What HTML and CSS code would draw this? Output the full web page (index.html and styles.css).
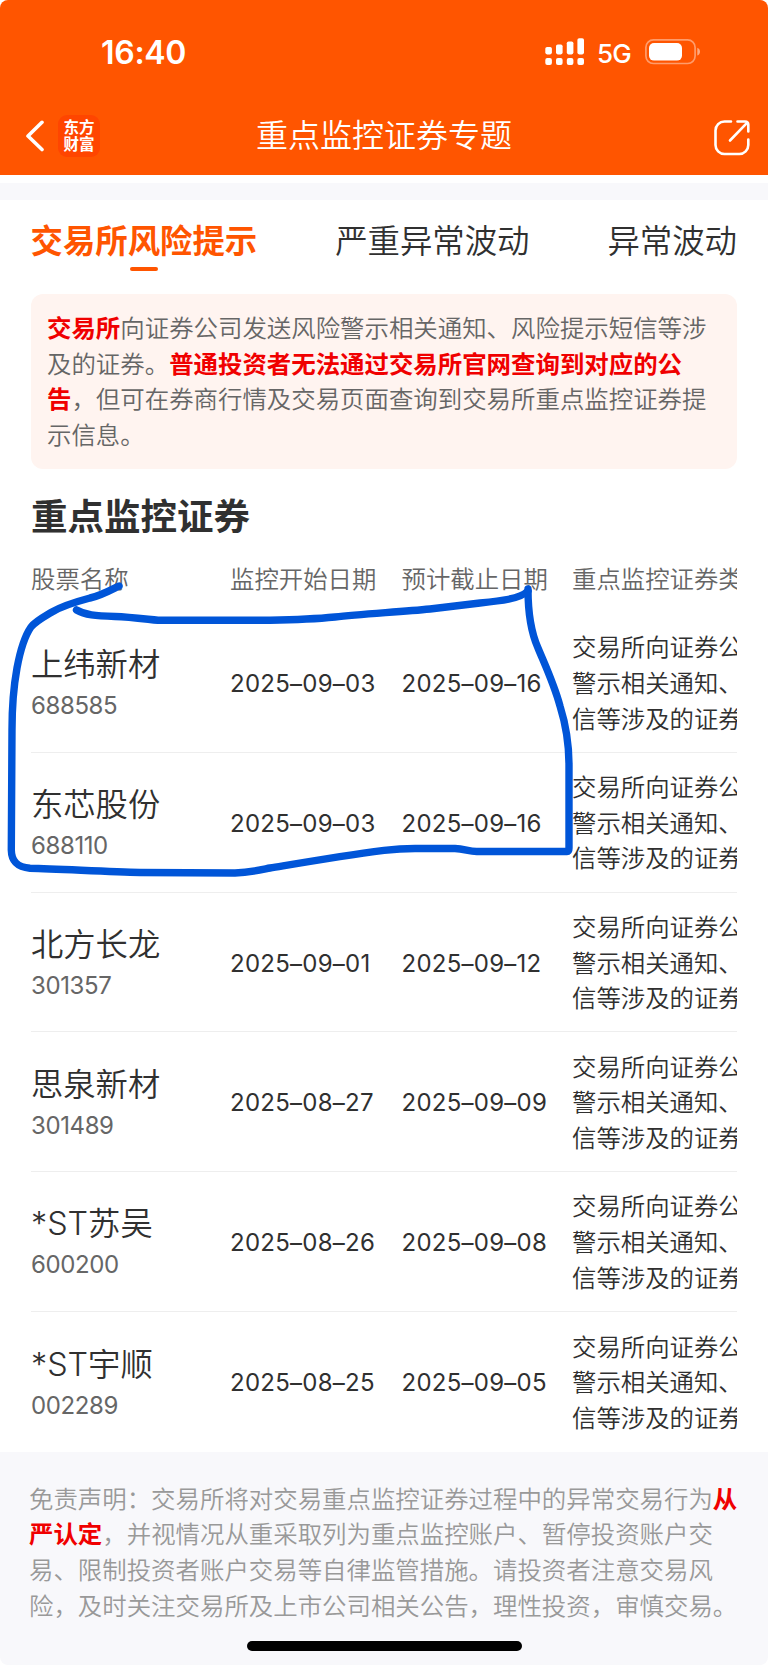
FILE: index.html
```
<!DOCTYPE html>
<html lang="zh-CN">
  <head>
    <meta charset="UTF-8" />
    <meta name="viewport" content="width=device-width, initial-scale=1.0" />
    <title>重点监控证券专题</title>
    <link rel="stylesheet" href="styles.css">
  </head>
  <body>
    <div class="screen">
      <header class="header">
        <div class="status-bar">
          <span class="time">16:40</span>
          <div class="status-right">
            <svg class="signal" width="40" height="28" viewBox="0 0 40 28" fill="currentColor">
              <rect x="0.3" y="9" width="6.6" height="7.4" rx="1.8"></rect>
              <rect x="11" y="6.5" width="6.6" height="9.9" rx="1.8"></rect>
              <rect x="21.8" y="3.5" width="6.6" height="12.9" rx="1.8"></rect>
              <rect x="32.4" y="0.2" width="6.6" height="16.2" rx="1.8"></rect>
              <rect x="0.3" y="20" width="6.6" height="7" rx="2"></rect>
              <rect x="11" y="20" width="6.6" height="7" rx="2"></rect>
              <rect x="21.8" y="20" width="6.6" height="7" rx="2"></rect>
              <rect x="32.4" y="20" width="6.6" height="7" rx="2"></rect>
            </svg>
            <span class="network">5G</span>
            <svg class="battery" width="56" height="26" viewBox="0 0 56 26">
              <rect x="0.9" y="0.9" width="49.2" height="23.6" rx="7.5" fill="none" stroke="#ffffff" stroke-opacity="0.42" stroke-width="1.7"></rect>
              <rect x="4" y="4" width="33" height="17.6" rx="5" fill="#ffffff"></rect>
              <path d="M52.3 8.8c3.6 1.3 3.6 6.5 0 7.8z" fill="#ffffff" fill-opacity="0.5"></path>
            </svg>
          </div>
        </div>
        <nav class="nav-bar">
          <div class="nav-left">
            <svg width="20" height="32" viewBox="0 0 20 32" fill="none" stroke="currentColor" stroke-width="3.6" stroke-linecap="round" stroke-linejoin="round">
              <polyline points="18 2.3 4 16 18 29.5"></polyline>
            </svg>
            <div class="logo"><span>东方</span><span>财富</span></div>
          </div>
          <h1 class="nav-title">重点监控证券专题</h1>
          <svg class="share" width="38" height="38" viewBox="0 0 38 38" fill="none" stroke="currentColor" stroke-width="2.6" stroke-linecap="round" stroke-linejoin="round">
            <path d="M18 2.5H11.5a9 9 0 0 0-9 9V26a9 9 0 0 0 9 9H26.3a9 9 0 0 0 9-9V20.5"></path>
            <path d="M24.5 2.5H32q3.3 0 3.3 3.3V12.5M34 3.8L17 21.5"></path>
          </svg>
        </nav>
      </header>

      <div class="divider"></div>

      <div class="tabs">
        <div class="tab active">交易所风险提示</div>
        <div class="tab">严重异常波动</div>
        <div class="tab">异常波动</div>
      </div>

      <p class="notice"><strong>交易所</strong>向证券公司发送风险警示相关通知、风险提示短信等涉<br>及的证券。<strong>普通投资者无法通过交易所官网查询到对应的公<br>告</strong>，但可在券商行情及交易页面查询到交易所重点监控证券提<br>示信息。</p>

      <main class="content">
        <h2 class="section-title">重点监控证券</h2>
        <div class="table">
          <div class="row head">
            <span>股票名称</span>
            <span>监控开始日期</span>
            <span>预计截止日期</span>
            <span>重点监控证券类</span>
          </div>
          <div class="row">
            <div class="stock"><span class="name">上纬新材</span><span class="code">688585</span></div>
            <span class="date">2025–09–03</span>
            <span class="date">2025–09–16</span>
            <span class="type">交易所向证券公<br>警示相关通知、<br>信等涉及的证券</span>
          </div>
          <div class="row">
            <div class="stock"><span class="name">东芯股份</span><span class="code">688110</span></div>
            <span class="date">2025–09–03</span>
            <span class="date">2025–09–16</span>
            <span class="type">交易所向证券公<br>警示相关通知、<br>信等涉及的证券</span>
          </div>
          <div class="row">
            <div class="stock"><span class="name">北方长龙</span><span class="code">301357</span></div>
            <span class="date">2025–09–01</span>
            <span class="date">2025–09–12</span>
            <span class="type">交易所向证券公<br>警示相关通知、<br>信等涉及的证券</span>
          </div>
          <div class="row">
            <div class="stock"><span class="name">思泉新材</span><span class="code">301489</span></div>
            <span class="date">2025–08–27</span>
            <span class="date">2025–09–09</span>
            <span class="type">交易所向证券公<br>警示相关通知、<br>信等涉及的证券</span>
          </div>
          <div class="row">
            <div class="stock"><span class="name">*ST苏吴</span><span class="code">600200</span></div>
            <span class="date">2025–08–26</span>
            <span class="date">2025–09–08</span>
            <span class="type">交易所向证券公<br>警示相关通知、<br>信等涉及的证券</span>
          </div>
          <div class="row">
            <div class="stock"><span class="name">*ST宇顺</span><span class="code">002289</span></div>
            <span class="date">2025–08–25</span>
            <span class="date">2025–09–05</span>
            <span class="type">交易所向证券公<br>警示相关通知、<br>信等涉及的证券</span>
          </div>
        </div>
      </main>

      <footer class="footer">
        <p class="disclaimer">免责声明：交易所将对交易重点监控证券过程中的异常交易行为<strong>从<br>严认定</strong>，并视情况从重采取列为重点监控账户、暂停投资账户交<br>易、限制投资者账户交易等自律监管措施。请投资者注意交易风<br>险，及时关注交易所及上市公司相关公告，理性投资，审慎交易。</p>
        <div class="home-bar"></div>
      </footer>

      <!-- hand-drawn marker around the first two stocks -->
      <svg class="marker" width="768" height="320" viewBox="0 570 768 320" fill="none" stroke="#0055d8" stroke-width="7.4" stroke-linecap="round" stroke-linejoin="round">
        <path d="M119 586C109 591 100 596 90 598C75 602 62 606 52 612C42 618 36 621 31 627C24 637 20 652 17 668C13 690 12 710 12 730L11.3 850C11.5 861 17 867 30 868.3C60 869 110 872 140 872.5L235 873C250 872.5 260 870 270 868C300 863 340 856 384 850.3Q400 848.5 415 848.5H455C465 849 470 852 478 851.5H567Q569 851.5 569 848V765C569 740 565 722 560 706C554 684 545 665 538 648C530 630 528 610 528 589"></path>
        <path d="M528 591C520 599 500 601 480 603L430 609C400 612 360 614 335 617C310 619.5 285 620 270 620.3H158C145 619 130 617 115 616.5C95 616 85 615 76.5 610"></path>
      </svg>
    </div>
  </body>
</html>
```
FILE: styles.css
```
:root {
  --primary: #ff5500;
  --red: #f00000;
  --text: #303030;
  --text-2: #666666;
  --muted: #999999;
  --panel: #f8f8fb;
}

* {
  box-sizing: border-box;
}

body {
  margin: 0;
  background-color: #ffffff;
  color: var(--text);
  font-family: Inter, 'Noto Sans CJK SC', sans-serif;
  font-weight: 350;
}

h1, h2, p {
  margin: 0;
}

.screen {
  position: relative;
  width: 768px;
  height: 1665px;
  overflow: hidden;
  display: flex;
  flex-direction: column;
}

.header {
  height: 175px;
  background-color: var(--primary);
  color: #ffffff;
  border-radius: 8px 8px 0 0;
}

.status-bar {
  height: 104px;
  padding: 1px 67px 0 101px;
  display: flex;
  align-items: center;
  justify-content: space-between;
}

.time {
  font-size: 32px;
  font-weight: 600;
  letter-spacing: -0.3px;
}

.status-right {
  display: flex;
  align-items: center;
}

.network {
  margin: 1px 14px 0 12px;
  font-size: 26px;
  font-weight: 500;
  letter-spacing: -0.8px;
}

.signal,
.battery {
  margin-top: -1px;
}

.nav-bar {
  height: 64px;
  padding: 0 17px 0 24px;
  display: grid;
  grid-template-columns: 232px 1fr 38px;
  align-items: center;
}

.nav-left {
  display: flex;
  align-items: center;
  gap: 14px;
}

.logo {
  width: 42px;
  height: 42px;
  border-radius: 9px;
  background-color: #ff4500;
  display: flex;
  flex-direction: column;
  align-items: center;
  justify-content: center;
  font-size: 15.5px;
  line-height: 17px;
  font-weight: 700;
}

.nav-title {
  font-size: 32px;
  font-weight: 350;
  line-height: 40px;
}

.share {
  margin-top: 4px;
}

.divider {
  height: 17px;
  margin-top: 8px;
  background-color: var(--panel);
}

.tabs {
  height: 94px;
  padding: 19px 31px 0 30.5px;
  display: flex;
  justify-content: space-between;
  font-size: 32.4px;
  line-height: 46px;
}

.tab.active {
  color: var(--primary);
  font-weight: 600;
}

.tab.active::after {
  content: '';
  display: block;
  width: 28px;
  height: 4px;
  margin: 2px auto 0;
  border-radius: 2px;
  background-color: var(--primary);
}

.notice {
  height: 175px;
  margin: 0 31px;
  padding: 17px 16px;
  border-radius: 12px;
  background-color: #fff4f0;
  color: var(--text-2);
  font-size: 24.43px;
  line-height: 35.7px;
  white-space: nowrap;
}

.notice strong,
.disclaimer strong {
  color: var(--red);
  font-weight: 700;
}

.content {
  height: 983px;
  padding: 20.5px 31px 0;
}

.section-title {
  font-size: 36.5px;
  line-height: 54px;
  font-weight: 700;
}

.table {
  margin-top: 16px;
  overflow: hidden;
}

.row {
  height: 139.75px;
  display: grid;
  grid-template-columns: 199px 171.5px 170.5px 172px;
  align-items: center;
  border-bottom: 1.5px solid #eeeeee;
  padding-top: 3px;
  font-size: 24.4px;
  line-height: 35.7px;
  white-space: nowrap;
}

.row:last-child {
  border-bottom: none;
}

.row.head {
  height: 53.5px;
  padding-top: 0;
  padding-bottom: 12px;
  border-bottom: none;
  color: var(--text-2);
}

.stock {
  display: flex;
  flex-direction: column;
}

.name {
  font-size: 32.3px;
  line-height: 44px;
}

.code {
  color: var(--text-2);
  font-size: 24px;
  font-weight: 400;
  line-height: 37px;
  letter-spacing: -0.4px;
}

.date {
  font-size: 24px;
  font-weight: 400;
  letter-spacing: 0.25px;
}

.footer {
  flex: 1;
  padding: 29.5px 29px 0;
  background-color: var(--panel);
  border-radius: 0 0 8px 8px;
}

.disclaimer {
  color: var(--muted);
  font-size: 24.43px;
  line-height: 35.7px;
  white-space: nowrap;
}

.home-bar {
  width: 275px;
  height: 10px;
  margin: 16.5px auto 0;
  border-radius: 5px;
  background-color: #000000;
}

.marker {
  position: absolute;
  top: 570px;
  left: 0;
}
```
